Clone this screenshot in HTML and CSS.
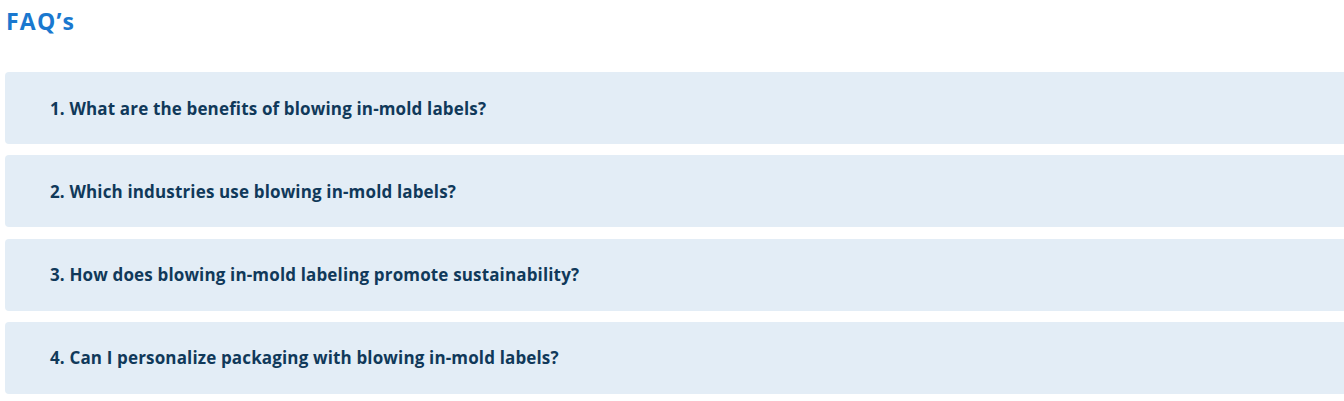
FILE: index.html
```html
<!DOCTYPE html>
<html>
<head>
<meta charset="utf-8">
<link rel="stylesheet" href="styles.css">
</head>
<body>
<div class="page">
  <h2 class="title">FAQ’s</h2>
  <div class="faq-list">
    <div class="faq-item"><span class="q">1. What are the benefits of blowing in-mold labels?</span></div>
    <div class="faq-item"><span class="q">2. Which industries use blowing in-mold labels?</span></div>
    <div class="faq-item"><span class="q">3. How does blowing in-mold labeling promote sustainability?</span></div>
    <div class="faq-item"><span class="q">4. Can I personalize packaging with blowing in-mold labels?</span></div>
  </div>
</div>
</body>
</html>
```
FILE: styles.css
```css
html, body { margin: 0; padding: 0; background: #fff; overflow: hidden; }
.page { padding: 0 0 0 5px; font-family: "Open Sans", "Noto Sans", sans-serif; }
.title {
  margin: 0;
  padding: 6px 0 0 1px;
  height: 72px;
  box-sizing: border-box;
  font-size: 23px;
  font-weight: 700;
  color: #1a78cf;
  line-height: 30px;
  letter-spacing: 1.2px;
}
.faq-list { display: flex; flex-direction: column; gap: 11.3px; width: 1380px; }
.faq-item {
  height: 72px;
  background: #e3edf6;
  border-radius: 4px;
  display: flex;
  align-items: center;
  padding-left: 45px;
}
.q { font-size: 17px; font-weight: 700; color: #10395a; letter-spacing: 0.15px; }
```
